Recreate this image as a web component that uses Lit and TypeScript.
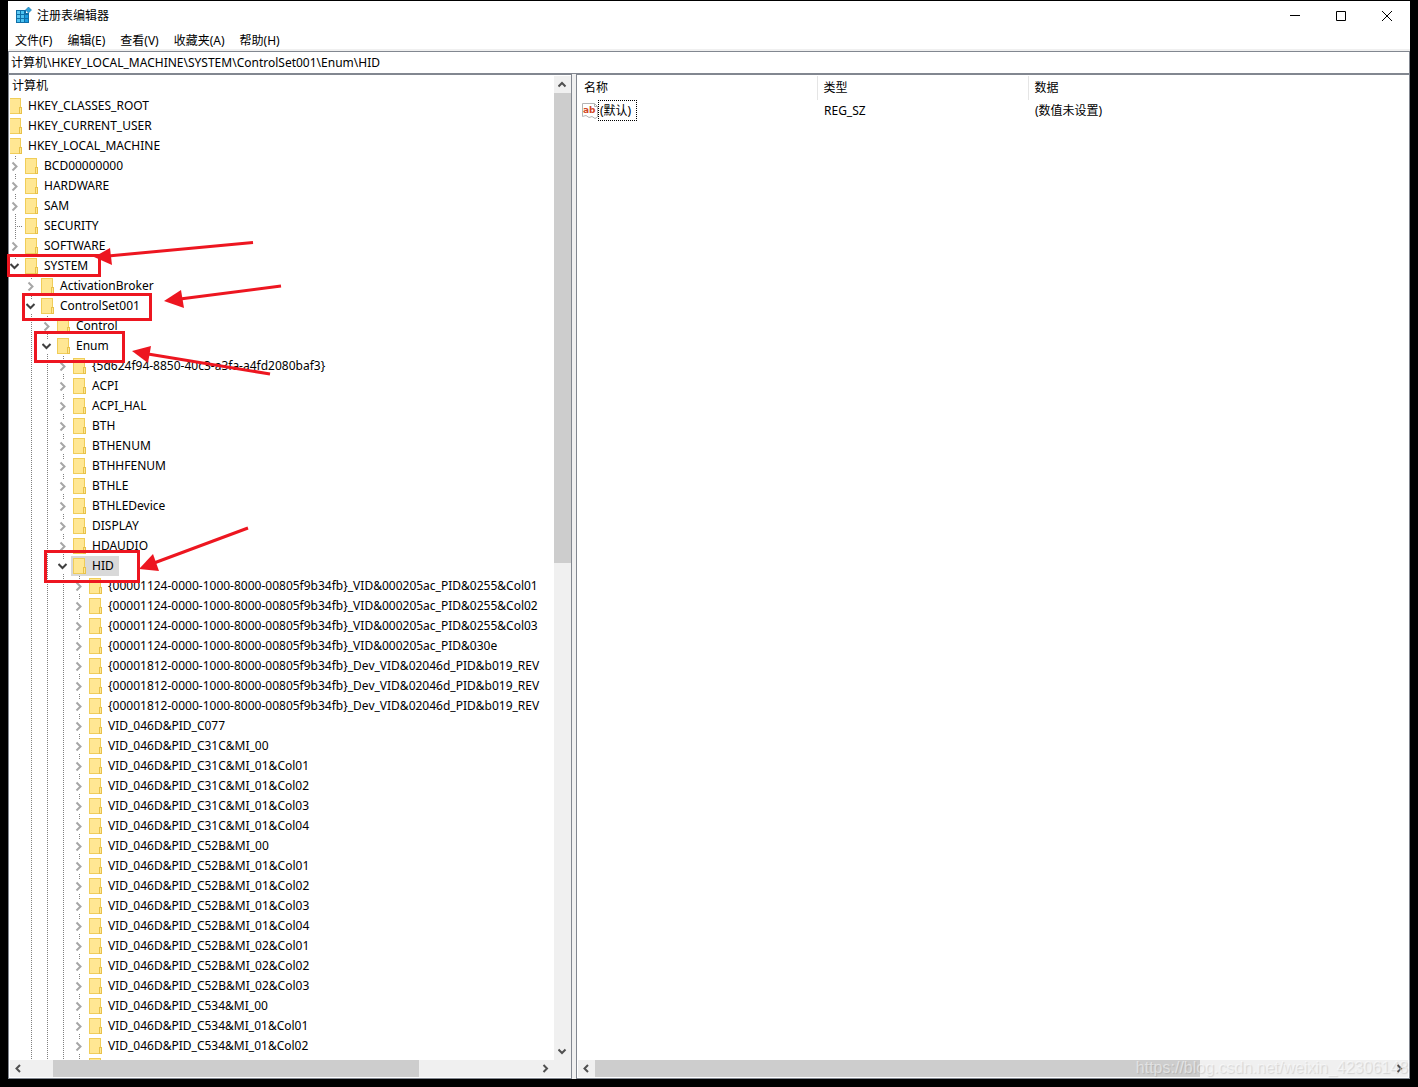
import { LitElement, html, css, svg, nothing } from "lit";
import { customElement, property } from "lit/decorators.js";
import { classMap } from "lit/directives/class-map.js";

type State = "open" | "closed" | "leaf" | "none";
interface Node {
  label: string;
  level: number;
  state: State;
  selected?: boolean;
}

const BT = "{00001124-0000-1000-8000-00805f9b34fb}_VID&000205ac_PID&";
const BLE = "{00001812-0000-1000-8000-00805f9b34fb}_Dev_VID&02046d_PID&b019_REV";

const at = (level: number, state: State, ...labels: string[]): Node[] =>
  labels.map((label) => ({ label, level, state }));

const NODES: Node[] = [
  ...at(-1, "none", "计算机"),
  ...at(0, "closed", "HKEY_CLASSES_ROOT", "HKEY_CURRENT_USER"),
  ...at(0, "open", "HKEY_LOCAL_MACHINE"),
  ...at(1, "closed", "BCD00000000", "HARDWARE", "SAM"),
  ...at(1, "leaf", "SECURITY"),
  ...at(1, "closed", "SOFTWARE"),
  ...at(1, "open", "SYSTEM"),
  ...at(2, "closed", "ActivationBroker"),
  ...at(2, "open", "ControlSet001"),
  ...at(3, "closed", "Control"),
  ...at(3, "open", "Enum"),
  ...at(4, "closed", "{5d624f94-8850-40c3-a3fa-a4fd2080baf3}", "ACPI", "ACPI_HAL", "BTH",
    "BTHENUM", "BTHHFENUM", "BTHLE", "BTHLEDevice", "DISPLAY", "HDAUDIO"),
  { label: "HID", level: 4, state: "open", selected: true },
  ...at(5, "closed", BT + "0255&Col01", BT + "0255&Col02", BT + "0255&Col03", BT + "030e",
    BLE, BLE, BLE,
    "VID_046D&PID_C077",
    "VID_046D&PID_C31C&MI_00",
    "VID_046D&PID_C31C&MI_01&Col01",
    "VID_046D&PID_C31C&MI_01&Col02",
    "VID_046D&PID_C31C&MI_01&Col03",
    "VID_046D&PID_C31C&MI_01&Col04",
    "VID_046D&PID_C52B&MI_00",
    "VID_046D&PID_C52B&MI_01&Col01",
    "VID_046D&PID_C52B&MI_01&Col02",
    "VID_046D&PID_C52B&MI_01&Col03",
    "VID_046D&PID_C52B&MI_01&Col04",
    "VID_046D&PID_C52B&MI_02&Col01",
    "VID_046D&PID_C52B&MI_02&Col02",
    "VID_046D&PID_C52B&MI_02&Col03",
    "VID_046D&PID_C534&MI_00",
    "VID_046D&PID_C534&MI_01&Col01",
    "VID_046D&PID_C534&MI_01&Col02",
    ""),
];

const FONT = css`12px/20px "Noto Sans", "Noto Sans CJK SC", sans-serif`;

@customElement("scroll-bar")
export class ScrollBar extends LitElement {
  @property({ type: Boolean, reflect: true }) vertical = false;
  @property({ type: Number }) before = 0;
  @property({ type: Number }) thumb = 50;
  @property({ type: Number }) after = 50;

  static styles = css`
    :host {
      display: flex;
      height: 17px;
      background: #f0f0f0;
    }
    :host([vertical]) {
      flex-direction: column;
      width: 17px;
      height: auto;
    }
    .arrow {
      flex: none;
      display: grid;
      place-items: center;
      width: 17px;
      height: 17px;
      padding: 0;
      border: 0;
      background: none;
    }
    .arrow path {
      fill: none;
      stroke: #505050;
      stroke-width: 2;
    }
    .thumb {
      background: #cdcdcd;
    }
  `;

  private arrow(label: string, d: string) {
    return html`<button class="arrow" aria-label=${label}>
      <svg width="9" height="9" viewBox="0 0 9 9"><path d=${d} /></svg>
    </button>`;
  }

  render() {
    return html`
      ${this.vertical
        ? this.arrow("向上滚动", "M.5 6.5 4 3 7.5 6.5")
        : this.arrow("向左滚动", "M6 1 2.5 4.5 6 8")}
      <div style="flex:${this.before} 0 0"></div>
      <div class="thumb" style="flex:${this.thumb} 0 0"></div>
      <div style="flex:${this.after} 0 0"></div>
      ${this.vertical
        ? this.arrow("向下滚动", "M.5 2.5 4 6 7.5 2.5")
        : this.arrow("向右滚动", "M2.5 1 6 4.5 2.5 8")}
    `;
  }
}

@customElement("key-tree")
export class KeyTree extends LitElement {
  static styles = css`
    :host {
      display: block;
      overflow: hidden;
      font: ${FONT};
      color: #000;
    }
    .list {
      list-style: none;
      margin: 0 0 0 -35px;
      padding: 0;
    }
    .row {
      display: flex;
      height: 20px;
      white-space: pre;
    }
    .cell {
      flex: none;
      display: grid;
      place-items: center;
      box-sizing: border-box;
      width: 16px;
      height: 20px;
      padding: 0;
      border: 0;
      background: none;
    }
    .guide {
      background: repeating-linear-gradient(#808080 0 1px, transparent 1px 2px) 8px 0 / 1px 100% no-repeat;
    }
    .leaf {
      background:
        repeating-linear-gradient(#808080 0 1px, transparent 1px 2px) 8px 0 / 1px 100% no-repeat,
        repeating-linear-gradient(90deg, #808080 0 1px, transparent 1px 2px) 8px 10px / 8px 1px no-repeat;
    }
    .toggle {
      background:
        linear-gradient(#fff, #fff) 0 3px / 100% 15px no-repeat,
        repeating-linear-gradient(#808080 0 1px, transparent 1px 2px) 8px 0 / 1px 100% no-repeat;
    }
    .toggle path {
      fill: none;
      stroke: #a6a6a6;
      stroke-width: 2;
    }
    .toggle.open path {
      stroke: #404040;
    }
    .item {
      flex: none;
      display: flex;
    }
    .label {
      padding: 0 5px;
    }
    .selected {
      background: #d9d9d9;
    }
  `;

  private folder() {
    return svg`<svg width="16" height="16" viewBox="0 0 16 16">
      <rect x="2.5" y="0.5" width="11" height="15" fill="#ffe793" stroke="#f0cd59" />
      <rect x="12.5" y="9.5" width="2" height="6" fill="#ffe793" stroke="#e8c24a" />
    </svg>`;
  }

  private toggle(n: Node) {
    if (n.state === "leaf") return html`<span class="cell leaf"></span>`;
    if (n.state === "none") return html`<span class="cell"></span>`;
    const open = n.state === "open";
    return html`<button
      class=${classMap({ cell: true, toggle: true, open })}
      aria-label=${open ? "折叠" : "展开"}
    >
      <svg width="10" height="10" viewBox="0 0 10 10">
        <path d=${open ? "M.5 3 4.5 7 8.5 3" : "M2.5 1.5 6.5 5.5 2.5 9.5"} />
      </svg>
    </button>`;
  }

  private row(n: Node) {
    const columns = Array.from({ length: n.level + 1 }, (_, i) => i);
    return html`<li class="row" role="treeitem" aria-level=${n.level + 2}>
      ${columns.map((c) => html`<span class=${classMap({ cell: true, guide: c > 2 })}></span>`)}
      ${this.toggle(n)}
      <span class=${classMap({ item: true, selected: !!n.selected })}>
        <span class="cell">${n.level < 0 ? nothing : this.folder()}</span>
        <span class="label">${n.label}</span>
      </span>
    </li>`;
  }

  render() {
    return html`<ul class="list" role="tree">${NODES.map((n) => this.row(n))}</ul>`;
  }
}

@customElement("value-list")
export class ValueList extends LitElement {
  static styles = css`
    :host {
      display: block;
      overflow: hidden;
      font: ${FONT};
      color: #000;
    }
    .table {
      width: 100%;
      table-layout: fixed;
      border-collapse: collapse;
    }
    .name {
      width: 239px;
    }
    .type {
      width: 211px;
    }
    .head {
      box-sizing: border-box;
      height: 24px;
      padding: 0 6px;
      border-right: 1px solid #e5e5e5;
      font-weight: 400;
      text-align: left;
    }
    .head:last-child {
      border-right: 0;
    }
    .value {
      height: 20px;
      padding: 0 7px;
    }
    .value:first-child {
      padding: 0 4px;
    }
    .entry {
      display: flex;
      align-items: center;
    }
    .focus {
      padding: 0 5px 0 1px;
      border: 1px dotted #000;
      line-height: 19px;
    }
    .ab {
      font: bold 9px "DejaVu Sans", sans-serif;
      fill: #d24726;
    }
  `;

  render() {
    return html`<table class="table">
      <colgroup><col class="name" /><col class="type" /><col /></colgroup>
      <thead>
        <tr>
          <th class="head">名称</th>
          <th class="head">类型</th>
          <th class="head">数据</th>
        </tr>
      </thead>
      <tbody>
        <tr>
          <td class="value">
            <span class="entry">
              <svg width="16" height="16" viewBox="0 0 16 16">
                <path d="M.5 .5H12.5L15.5 3.5V14L13 15.5 10 13.5 7 14.5 4 12.5 .5 13.5Z" fill="#fff" stroke="#b4b4b4" />
                <path d="M12.5 .5V3.5H15.5" fill="none" stroke="#b4b4b4" />
                <text class="ab" x="1" y="10">ab</text>
              </svg>
              <span class="focus">(默认)</span>
            </span>
          </td>
          <td class="value">REG_SZ</td>
          <td class="value">(数值未设置)</td>
        </tr>
      </tbody>
    </table>`;
  }
}

@customElement("app-root")
export class AppRoot extends LitElement {
  static styles = css`
    :host {
      position: relative;
      display: block;
      box-sizing: border-box;
      height: 100vh;
      padding: 1px 8px 8px;
      overflow: hidden;
      background: #000;
      font: ${FONT};
      color: #000;
    }
    .window {
      display: flex;
      flex-direction: column;
      height: 100%;
      background: #fff;
    }
    .titlebar {
      flex: none;
      display: flex;
      align-items: center;
      height: 29px;
      padding-left: 7px;
    }
    .title {
      flex: 1;
      padding-left: 5px;
    }
    .control {
      display: grid;
      place-items: center;
      width: 46px;
      height: 29px;
      padding: 0;
      border: 0;
      background: none;
    }
    .control path {
      fill: none;
      stroke: #000;
    }
    .menubar {
      flex: none;
      display: flex;
      gap: 1px;
      box-sizing: border-box;
      height: 21px;
      padding-top: 1px;
      border-bottom: 2px solid #f0f0f0;
    }
    .menu {
      height: 20px;
      padding: 0 7px;
      border: 0;
      background: none;
      font: ${FONT};
      color: #000;
    }
    .address {
      flex: none;
      box-sizing: border-box;
      width: 100%;
      height: 23px;
      padding: 0 2px 1px;
      border: 1px solid #828790;
      outline: 0;
      background: #fff;
      font: ${FONT};
      color: #000;
    }
    .panes {
      flex: 1;
      min-height: 0;
      display: flex;
      gap: 4px;
      background: #f0f0f0;
    }
    .pane {
      box-sizing: border-box;
      display: grid;
      grid-template-rows: minmax(0, 1fr) auto;
      padding: 1px;
      border: 1px solid #828790;
      background: #fff;
    }
    .keys {
      width: 564px;
      grid-template-columns: minmax(0, 1fr) auto;
      padding-right: 0;
    }
    .values {
      flex: 1;
      min-width: 0;
      grid-template-columns: minmax(0, 1fr);
    }
    .corner {
      background: #f0f0f0;
    }
    .marks {
      position: absolute;
      top: 0;
      left: 0;
      pointer-events: none;
    }
    .marks rect {
      fill: none;
      stroke: #ed1620;
      stroke-width: 3;
    }
    .marks line {
      stroke: #ed1620;
      stroke-width: 3;
    }
    .marks polygon {
      fill: #ed1620;
    }
    .watermark {
      position: absolute;
      right: 10px;
      bottom: 9px;
      font: 16px/20px "Liberation Sans", sans-serif;
      color: rgba(255, 255, 255, 0.5);
      text-shadow: 1px 1px 1px rgba(0, 0, 0, 0.12);
      pointer-events: none;
    }
  `;

  render() {
    return html`
      <main class="window">
        <header class="titlebar">
          <svg width="17" height="17" viewBox="0 0 17 17">
            <path d="M1 3H11V6H14V16H1Z" fill="#0f6fa8" />
            <path d="M2 4H5V7H2ZM2 8H5V11H2Z" fill="#5cc8f2" />
            <path d="M6 4H9V7H6ZM6 8H9V11H6ZM6 12H9V15H6ZM2 12H5V15H2Z" fill="#4cc2f0" />
            <path d="M10 8H13V11H10ZM10 12H13V15H10Z" fill="#1a9be0" />
            <path d="M13.5 0 16.5 3 13.5 6 10.5 3Z" fill="#2d9fd8" stroke="#1478b0" stroke-width=".6" />
          </svg>
          <span class="title">注册表编辑器</span>
          <button class="control" aria-label="最小化">
            <svg width="10" height="11" viewBox="0 0 10 11"><path d="M0 5.5H10" /></svg>
          </button>
          <button class="control" aria-label="最大化">
            <svg width="10" height="10" viewBox="0 0 10 10"><path d="M.5 .5H9.5V9.5H.5Z" /></svg>
          </button>
          <button class="control" aria-label="关闭">
            <svg width="10" height="10" viewBox="0 0 10 10"><path d="M0 0 10 10M10 0 0 10" /></svg>
          </button>
        </header>
        <nav class="menubar">
          ${["文件(F)", "编辑(E)", "查看(V)", "收藏夹(A)", "帮助(H)"].map(
            (m) => html`<button class="menu">${m}</button>`
          )}
        </nav>
        <input
          class="address"
          aria-label="地址"
          value="计算机\\HKEY_LOCAL_MACHINE\\SYSTEM\\ControlSet001\\Enum\\HID"
        />
        <div class="panes">
          <section class="pane keys">
            <key-tree></key-tree>
            <scroll-bar vertical .before=${0} .thumb=${470} .after=${480}></scroll-bar>
            <scroll-bar .before=${26} .thumb=${366} .after=${118}></scroll-bar>
            <div class="corner"></div>
          </section>
          <section class="pane values">
            <value-list></value-list>
            <scroll-bar .before=${0} .thumb=${605} .after=${191}></scroll-bar>
          </section>
        </div>
      </main>
      <svg class="marks" width="300" height="600" viewBox="0 0 300 600" aria-hidden="true">
        <rect x="8.5" y="255.5" width="91" height="20" />
        <rect x="23.5" y="294.5" width="127" height="25" />
        <rect x="35.5" y="332.5" width="88" height="29" />
        <rect x="45.5" y="551.5" width="93" height="30" />
        <line x1="253" y1="242.5" x2="108" y2="256" />
        <polygon points="94,257 110,248 112,265" />
        <line x1="281" y1="286" x2="180" y2="299" />
        <polygon points="164,301 181,290 184,308" />
        <line x1="270" y1="374" x2="148" y2="354" />
        <polygon points="132,351 151,346 148,363" />
        <line x1="248" y1="528" x2="154" y2="563" />
        <polygon points="139,569 153,554 159,571" />
      </svg>
      <span class="watermark">https://blog.csdn.net/weixin_42306148</span>
    `;
  }
}
